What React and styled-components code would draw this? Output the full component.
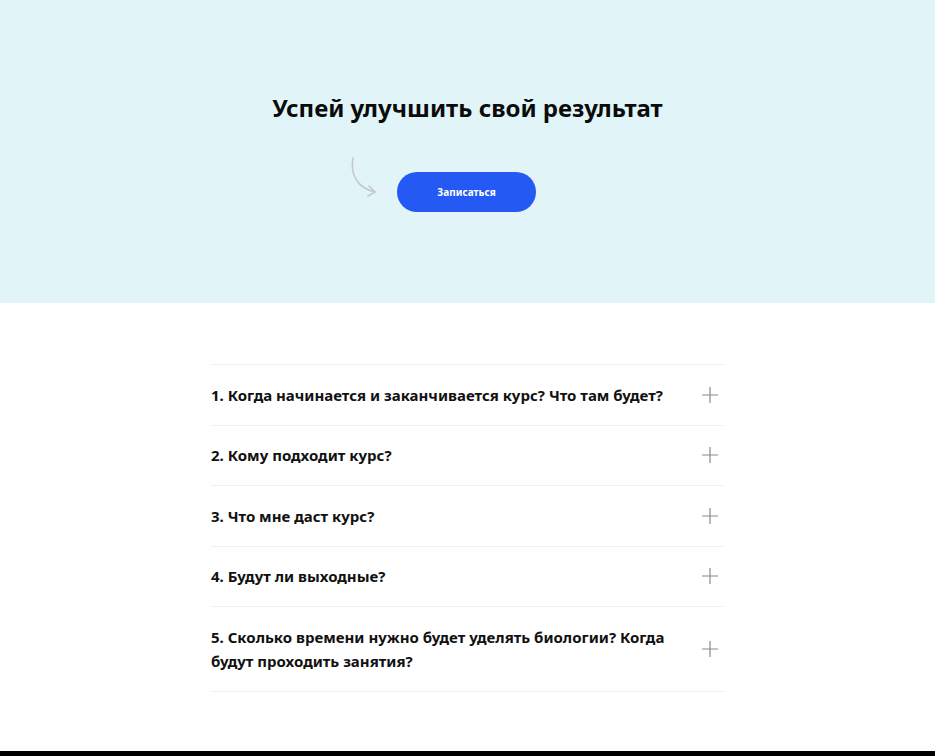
import React from "react";
import styled, { createGlobalStyle } from "styled-components";

const GlobalStyle = createGlobalStyle`
  body {
    margin: 0;
    background: #ffffff;
    font-family: "Noto Sans", "Open Sans", sans-serif;
  }
`;

const Page = styled.div`
  display: flex;
  flex-direction: column;
  min-height: 756px;
`;

const Hero = styled.section`
  display: flex;
  flex-direction: column;
  align-items: center;
  height: 303px;
  box-sizing: border-box;
  padding-top: 90px;
  background: #e1f5f8;
`;

const Title = styled.h2`
  margin: 0;
  font-size: 24px;
  line-height: 36px;
  font-weight: 700;
  color: #0b0b0b;
`;

const CtaRow = styled.div`
  position: relative;
  display: flex;
  margin-top: 46px;
`;

const Arrow = styled.svg`
  position: absolute;
  left: -50px;
  top: -16px;
`;

const Button = styled.button`
  width: 139px;
  height: 40px;
  margin-left: -2px;
  border: none;
  border-radius: 20px;
  background: #2559f4;
  color: #ffffff;
  font-family: inherit;
  font-size: 10px;
  font-weight: 700;
  cursor: pointer;
`;

const Faq = styled.section`
  flex: 1;
  display: flex;
  flex-direction: column;
  align-items: center;
  padding-top: 61px;
`;

const List = styled.div`
  width: 513px;
  border-top: 1px solid #f0f0f0;
`;

const Item = styled.div`
  display: flex;
  align-items: center;
  justify-content: space-between;
  min-height: 60.5px;
  padding: ${(p) => (p.$tall ? "18px 0" : "0")};
  box-sizing: border-box;
  border-bottom: 1px solid #f0f0f0;
`;

const Question = styled.div`
  max-width: 465px;
  font-size: 15px;
  line-height: 24px;
  font-weight: 700;
  color: #111111;
`;

const Plus = styled.svg`
  flex-shrink: 0;
  margin-right: 6px;
`;

const Footer = styled.div`
  height: 5px;
  background: #000000;
`;

const questions = [
  "1. Когда начинается и заканчивается курс? Что там будет?",
  "2. Кому подходит курс?",
  "3. Что мне даст курс?",
  "4. Будут ли выходные?",
  "5. Сколько времени нужно будет уделять биологии? Когда будут проходить занятия?",
];

function App() {
  return (
    <Page>
      <GlobalStyle />
      <Hero>
        <Title>Успей улучшить свой результат</Title>
        <CtaRow>
          <Arrow width="34" height="44" viewBox="0 0 34 44" fill="none">
            <path
              d="M4 2 C1 18, 8 32, 26 36"
              stroke="#c4c9ca"
              strokeWidth="1.6"
              strokeLinecap="round"
            />
            <path
              d="M20 30 L26 36 L19 40"
              stroke="#c4c9ca"
              strokeWidth="1.6"
              strokeLinecap="round"
              strokeLinejoin="round"
            />
          </Arrow>
          <Button>Записаться</Button>
        </CtaRow>
      </Hero>
      <Faq>
        <List>
          {questions.map((q, i) => (
            <Item key={i} $tall={i === 4}>
              <Question>{q}</Question>
              <Plus width="16" height="16" viewBox="0 0 16 16">
                <path d="M8 0 V16 M0 8 H16" stroke="#8a8a8a" strokeWidth="1.2" />
              </Plus>
            </Item>
          ))}
        </List>
      </Faq>
      <Footer />
    </Page>
  );
}

export default App;
